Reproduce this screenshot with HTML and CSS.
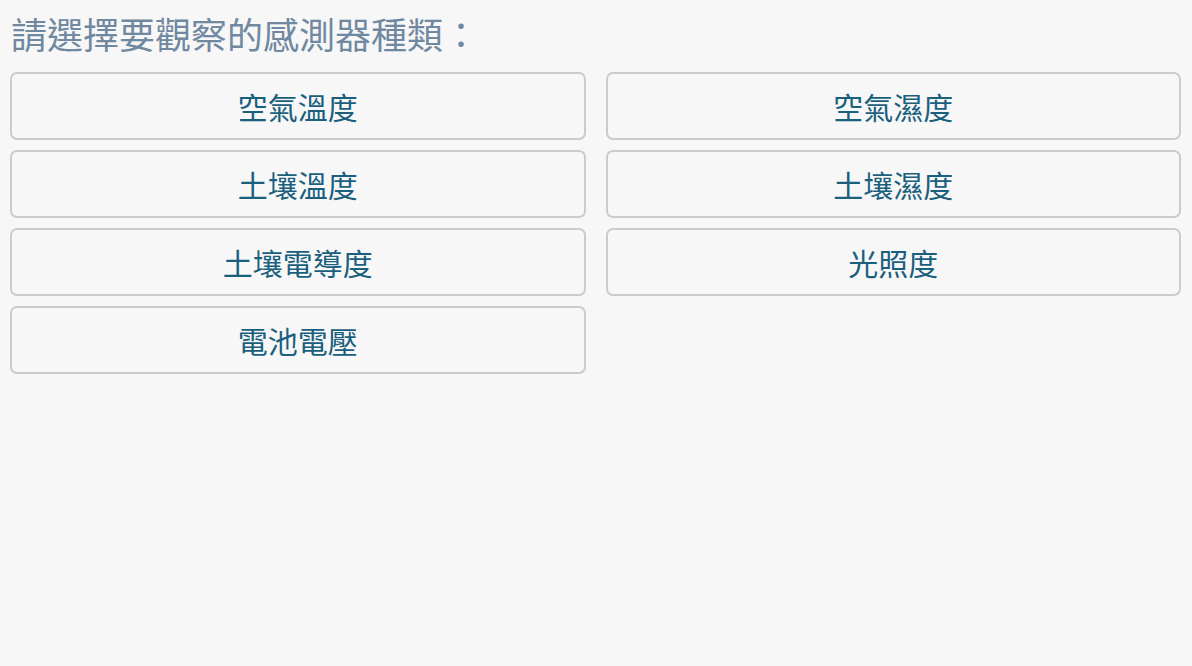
FILE: index.html
```html
<!DOCTYPE html>
<html lang="zh-Hant">
<head>
<meta charset="utf-8">
<link rel="stylesheet" href="styles.css">
</head>
<body>
<div class="page">
  <h1 class="title">請選擇要觀察的感測器種類：</h1>
  <div class="grid">
    <button class="btn">空氣溫度</button>
    <button class="btn">空氣濕度</button>
    <button class="btn">土壤溫度</button>
    <button class="btn">土壤濕度</button>
    <button class="btn">土壤電導度</button>
    <button class="btn">光照度</button>
    <button class="btn">電池電壓</button>
  </div>
</div>
</body>
</html>
```
FILE: styles.css
```css
html, body {
  margin: 0;
  padding: 0;
  background: #f7f7f7;
}
body {
  font-family: "Noto Sans CJK TC", "Noto Sans", sans-serif;
}
.page {
  padding: 10px 11px 0 10px;
}
.title {
  margin: 0 0 16px 1px;
  font-size: 36px;
  font-weight: normal;
  line-height: 46px;
  color: #7088a0;
}
.grid {
  display: grid;
  grid-template-columns: 1fr 1fr;
  column-gap: 20px;
  row-gap: 10px;
}
.btn {
  height: 68px;
  border: 2px solid #cccccc;
  border-radius: 7px;
  background: #f7f7f7;
  color: #1a5f7e;
  font-family: "Noto Sans CJK TC", "Noto Sans", sans-serif;
  font-size: 30px;
  padding: 0;
  text-align: center;
}
```
